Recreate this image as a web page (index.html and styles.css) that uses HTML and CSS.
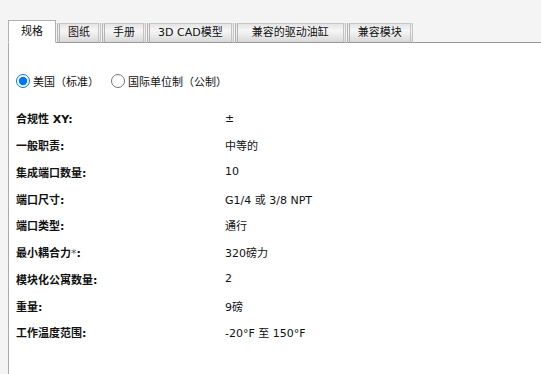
FILE: index.html
```html
<!DOCTYPE HTML>
<html>
	<head>
		<title>规格</title>
		<meta charset="utf-8">
		<link rel="stylesheet" href="styles.css">
	</head>
	<body>
		<div class="page">
			<ul class="tabs">
				<li class="tab active">规格</li>
				<li class="tab">图纸</li>
				<li class="tab">手册</li>
				<li class="tab">3D CAD模型</li>
				<li class="tab wide">兼容的驱动油缸</li>
				<li class="tab">兼容模块</li>
			</ul>
			<div class="panel">
				<div class="units">
					<label class="unit"><input type="radio" name="units" checked>美国（标准）</label>
					<label class="unit"><input type="radio" name="units">国际单位制（公制）</label>
				</div>
				<div class="specs">
					<div class="name">合规性 XY:</div><div class="value">±</div>
					<div class="name">一般职责:</div><div class="value">中等的</div>
					<div class="name">集成端口数量:</div><div class="value">10</div>
					<div class="name">端口尺寸:</div><div class="value">G1/4 或 3/8 NPT</div>
					<div class="name">端口类型:</div><div class="value">通行</div>
					<div class="name">最小耦合力<span class="star">*</span>:</div><div class="value">320磅力</div>
					<div class="name">模块化公寓数量:</div><div class="value">2</div>
					<div class="name">重量:</div><div class="value">9磅</div>
					<div class="name">工作温度范围:</div><div class="value">-20°F 至 150°F</div>
				</div>
			</div>
		</div>
	</body>
</html>
```

FILE: styles.css
```css
*
{
	box-sizing: border-box;
}
body
{
	margin: 0px;
	padding: 0px;
	background: #f4f4f4;
	font-family: "DejaVu Sans", "Noto Sans CJK SC", sans-serif;
	font-size: 11px;
	color: #111;
	height: 374px;
	overflow: hidden;
}
.page{
	padding: 20px 0 0 8px;
	display: flex;
	flex-direction: column;
	height: 100%;
}
.tabs{
	display: flex;
	align-items: flex-end;
	list-style: none;
	margin: 0;
	padding: 0;
	height: 23px;
	position: relative;
	z-index: 1;
}
.tab{
	height: 20px;
	padding: 0 8px;
	margin-right: 1px;
	line-height: 18px;
	text-align: center;
	border: 1px solid #c8c8c8;
	border-left: 3px double #b4b4b4;
	border-right: 3px double #c4c4c4;
	border-bottom: 1px solid #999;
	background: linear-gradient(#e4e4e4, #f6f6f6 35%, #ececec 60%, #d8d8d8);
}
.tab.wide{
	padding: 0 14px;
}
.tab.active{
	height: 23px;
	width: 48px;
	line-height: 22px;
	padding: 0;
	border: 1px solid #b0b0b0;
	border-bottom: 1px solid #fff;
	background: #fff;
}
.panel{
	flex: 1;
	margin-top: -1px;
	background: #fff;
	border-top: 1px solid #999;
	border-left: 1px solid #aaa;
	padding: 26px 0 0 7px;
}
.units{
	display: flex;
	gap: 12px;
	height: 24px;
	align-items: center;
}
.unit{
	display: flex;
	align-items: center;
}
.unit input{
	margin: 0 3px 0 0;
	width: 14px;
	height: 14px;
}
.specs{
	display: grid;
	grid-template-columns: 209px 1fr;
	grid-auto-rows: 26.75px;
	align-items: center;
	margin-top: 12px;
}
.name{
	font-weight: bold;
}
.star{
	font-weight: normal;
	color: #555;
}
```
